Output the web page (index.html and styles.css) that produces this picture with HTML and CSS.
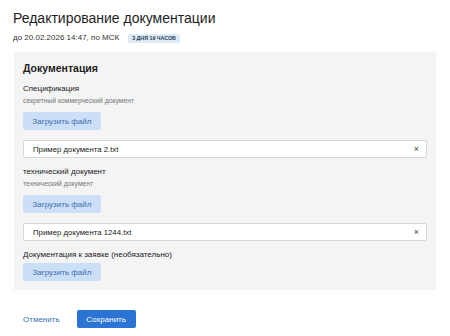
FILE: index.html
```html
<!DOCTYPE html>
<html lang="ru">
<head>
<meta charset="utf-8">
<link rel="stylesheet" href="styles.css">
</head>
<body>
<div class="page">
  <h1 class="title">Редактирование документации</h1>
  <div class="deadline">
    <span>до 20.02.2026 14:47, по МСК</span>
    <span class="badge">3 дня 19 часов</span>
  </div>
  <section class="panel">
    <h2 class="panel-title">Документация</h2>

    <div class="field">
      <div class="label">Спецификация</div>
      <div class="hint">секретный коммерческий документ</div>
      <button class="upload">Загрузить файл</button>
      <div class="file"><span>Пример документа 2.txt</span><span class="remove">×</span></div>
    </div>

    <div class="field">
      <div class="label">технический документ</div>
      <div class="hint">технический документ</div>
      <button class="upload">Загрузить файл</button>
      <div class="file"><span>Пример документа 1244.txt</span><span class="remove">×</span></div>
    </div>

    <div class="field last">
      <div class="label">Документация к заявке (необязательно)</div>
      <button class="upload tight">Загрузить файл</button>
    </div>
  </section>
  <div class="actions">
    <button class="cancel">Отменить</button>
    <button class="save">Сохранить</button>
  </div>
</div>
</body>
</html>
```

FILE: styles.css
```css
* { box-sizing: border-box; }
html, body { margin: 0; padding: 0; background: #fff; }
body {
  font-family: "Liberation Sans", Arial, sans-serif;
  color: #222;
}
.page {
  padding: 8px 14px 0 13px;
  width: 450px;
}
.title {
  margin: 0;
  font-size: 14px;
  font-weight: normal;
  line-height: 20px;
  color: #1e1e1e;
}
.deadline {
  display: flex;
  align-items: center;
  gap: 9px;
  margin-top: 4px;
  font-size: 8px;
  line-height: 12px;
  color: #333;
}
.badge {
  background: #dcebf6;
  color: #2a3b55;
  font-size: 5.3px;
  font-weight: bold;
  text-transform: uppercase;
  padding: 1px 4px;
  border-radius: 2px;
  line-height: 7px;
}
.panel {
  margin: 8px 0 0 1px;
  background: #f4f4f4;
  padding: 8px 9px 9px;
  display: flex;
  flex-direction: column;
}
.panel-title {
  margin: 0;
  font-size: 10.5px;
  line-height: 16px;
  font-weight: bold;
  color: #1e1e1e;
}
.field {
  display: flex;
  flex-direction: column;
  align-items: flex-start;
  margin-top: 7px;
}
.field + .field { margin-top: 8px; }
.field.last { margin-top: 8px; }
.label {
  font-size: 8px;
  line-height: 12px;
  color: #222;
}
.hint {
  margin-top: 1px;
  font-size: 6.8px;
  line-height: 10px;
  color: #777;
}
.upload {
  margin-top: 6px;
  height: 18px;
  width: 78px;
  border: none;
  border-radius: 2px;
  background: #cbdff7;
  color: #3d6db0;
  font-family: inherit;
  font-size: 8px;
  padding: 0;
}
.upload.tight { margin-top: 2px; }
.file {
  margin-top: 10px;
  width: 100%;
  height: 18px;
  background: #fff;
  border: 1px solid #d6d6d6;
  border-radius: 2px;
  display: flex;
  align-items: center;
  justify-content: space-between;
  padding: 0 7px 0 9px;
  font-size: 7.8px;
  color: #222;
}
.remove {
  font-size: 9px;
  color: #444;
}
.actions {
  display: flex;
  align-items: center;
  gap: 17px;
  margin-top: 20px;
  padding-left: 10px;
}
.cancel {
  border: none;
  background: none;
  padding: 0;
  font-family: inherit;
  font-size: 8px;
  color: #3a6fb4;
}
.save {
  height: 18px;
  width: 59px;
  border: none;
  border-radius: 2px;
  background: #2b74d3;
  color: #fff;
  font-family: inherit;
  font-size: 8px;
  padding: 0;
}
```
